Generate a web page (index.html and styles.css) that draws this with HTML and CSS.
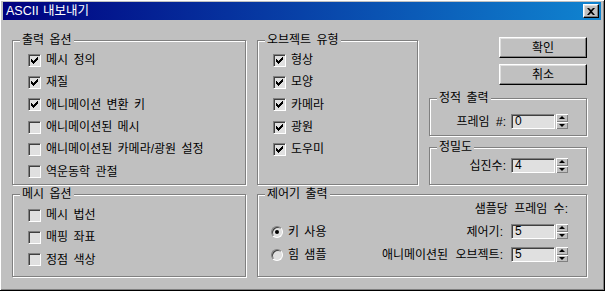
FILE: index.html
```html
<!DOCTYPE html>
<html lang="ko">
<head>
  <meta charset="UTF-8" />
  <title>ASCII 내보내기</title>
  <link rel="stylesheet" href="styles.css">
</head>
<body>

  <div class="window">
    <div class="titlebar">
      <span class="title">ASCII 내보내기</span>
      <button class="close-btn">
        <svg width="8" height="7" viewBox="0 0 8 7"><path d="M0 0h2l2 2 2-2h2L5 3.5 8 7H6L4 5 2 7H0l3-3.5z" fill="#000"/></svg>
      </button>
    </div>

    <div class="content">
      <fieldset class="group out-opts">
        <legend>출력 옵션</legend>
        <div class="check-list">
          <div class="check on"><span class="box"></span>메시 정의</div>
          <div class="check on"><span class="box"></span>재질</div>
          <div class="check on"><span class="box"></span>애니메이션 변환 키</div>
          <div class="check"><span class="box"></span>애니메이션된 메시</div>
          <div class="check"><span class="box"></span>애니메이션된 카메라/광원 설정</div>
          <div class="check"><span class="box"></span>역운동학 관절</div>
        </div>
      </fieldset>

      <fieldset class="group obj-types">
        <legend>오브젝트 유형</legend>
        <div class="check-list">
          <div class="check on"><span class="box"></span>형상</div>
          <div class="check on"><span class="box"></span>모양</div>
          <div class="check on"><span class="box"></span>카메라</div>
          <div class="check on"><span class="box"></span>광원</div>
          <div class="check on"><span class="box"></span>도우미</div>
        </div>
      </fieldset>

      <div class="side">
        <button class="btn">확인</button>
        <button class="btn">취소</button>
        <fieldset class="group static-out">
          <legend>정적 출력</legend>
          <div class="field-row">
            <span>프레임 #:</span>
            <div class="spin"><span class="spin-field">0</span><span class="spin-btns"><i class="up"></i><i class="down"></i></span></div>
          </div>
        </fieldset>
        <fieldset class="group precision">
          <legend>정밀도</legend>
          <div class="field-row">
            <span>십진수:</span>
            <div class="spin"><span class="spin-field">4</span><span class="spin-btns"><i class="up"></i><i class="down"></i></span></div>
          </div>
        </fieldset>
      </div>

      <fieldset class="group mesh-opts">
        <legend>메시 옵션</legend>
        <div class="check-list">
          <div class="check"><span class="box"></span>메시 법선</div>
          <div class="check"><span class="box"></span>매핑 좌표</div>
          <div class="check"><span class="box"></span>정점 색상</div>
        </div>
      </fieldset>

      <fieldset class="group ctrl-out">
        <legend>제어기 출력</legend>
        <div class="ctrl-grid">
          <span class="samples-head">샘플당 프레임 수:</span>
          <div class="radio on"><span class="dot"></span>키 사용</div>
          <span class="ctrl-label">제어기:</span>
          <div class="spin"><span class="spin-field">5</span><span class="spin-btns"><i class="up"></i><i class="down"></i></span></div>
          <div class="radio"><span class="dot"></span>힘 샘플</div>
          <span class="ctrl-label">애니메이션된 오브젝트:</span>
          <div class="spin"><span class="spin-field">5</span><span class="spin-btns"><i class="up"></i><i class="down"></i></span></div>
        </div>
      </fieldset>
    </div>
  </div>

</body>
</html>
```

FILE: styles.css
```css
body {
  margin: 0;
  font-family: "Liberation Sans", "Noto Sans CJK KR", sans-serif;
  font-size: 12px;
  line-height: 14px;
  word-spacing: 2px;
  color: #000;
  background: #c0c0c0;
}
.window {
  width: 605px;
  height: 291px;
  box-sizing: border-box;
  padding: 2px 3px 3px 3px;
  background: #c0c0c0;
  border-right: 1px solid #000;
  border-bottom: 1px solid #000;
  box-shadow: inset 1px 1px 0 #fff, inset -1px -1px 0 #808080;
}
.titlebar {
  height: 18px;
  display: flex;
  align-items: center;
  justify-content: space-between;
  padding: 0 2px 0 3px;
  background: linear-gradient(90deg, #000080, #1084d0);
}
.title {
  color: #fff;
  font-size: 12.5px;
  word-spacing: 1px;
}
.close-btn, .btn {
  background: #c0c0c0;
  border: 1px solid;
  border-color: #fff #000 #000 #fff;
  box-shadow: inset -1px -1px 0 #808080, inset 1px 1px 0 #dfdfdf;
  padding: 0;
  font: inherit;
  color: #000;
}
.close-btn {
  width: 16px;
  height: 14px;
  display: flex;
  align-items: center;
  justify-content: center;
}
.content {
  display: grid;
  grid-template-columns: 234px 161px 158px;
  grid-template-rows: 152px 90px;
  column-gap: 11px;
  row-gap: 2px;
  padding: 13px 0 0 9px;
}
.ctrl-out {
  grid-column: 2 / 4;
}

/* group boxes */
.group {
  margin: 0;
  padding: 0 7px;
  border: 1px solid #808080;
  box-shadow: inset 1px 1px 0 #fff, 1px 1px 0 #fff;
  min-width: 0;
}
.group legend {
  padding: 0 2px;
  background: #c0c0c0;
}

/* check boxes */
.check-list {
  display: flex;
  flex-direction: column;
  padding-top: 2px;
  margin-left: 8px;
}
.mesh-opts .check-list {
  padding-top: 3px;
}
.check {
  height: 22.3px;
  display: flex;
  align-items: center;
  gap: 5px;
}
.box {
  width: 13px;
  height: 13px;
  box-sizing: border-box;
  border: 1px solid;
  border-color: #808080 #fff #fff #808080;
  box-shadow: inset 1px 1px 0 #404040, inset -1px -1px 0 #dfdfdf;
  background: #e0e0e0;
}
.check.on .box {
  background: #e0e0e0 url("data:image/svg+xml,%3Csvg xmlns='http://www.w3.org/2000/svg' width='7' height='7'%3E%3Cpath d='M6 0h1v1H6zM5 1h2v1H5zM0 2h1v1H0zM4 2h3v1H4zM0 3h2v1H0zM3 3h3v1H3zM0 4h5v1H0zM1 5h3v1H1zM2 6h1v1H2z'/%3E%3C/svg%3E") no-repeat 2px 2px;
}

/* right side */
.side {
  display: flex;
  flex-direction: column;
}
.btn {
  align-self: flex-end;
  width: 88px;
  height: 21px;
  margin-top: 6px;
}
.btn:first-child {
  margin-top: 4px;
}
.static-out, .precision {
  height: 45px;
  margin-top: 6px;
  box-sizing: border-box;
}
.precision {
  margin-top: 4px;
}
.field-row {
  display: flex;
  justify-content: flex-end;
  align-items: center;
  gap: 5px;
  padding: 9px 11px 0 0;
  word-spacing: 3px;
}
.precision .field-row {
  padding-top: 4px;
}

/* spinners */
.spin {
  display: flex;
  gap: 1px;
}
.spin-field {
  width: 44px;
  height: 15px;
  box-sizing: border-box;
  border: 1px solid;
  border-color: #808080 #fff #fff #808080;
  box-shadow: inset 1px 1px 0 #404040, inset -1px -1px 0 #dfdfdf;
  background: #e0e0e0;
  padding-left: 3px;
  font-size: 12px;
  line-height: 13px;
}
.spin-btns {
  width: 12px;
  height: 15px;
  display: flex;
  flex-direction: column;
}
.spin-btns i {
  flex: 1;
  position: relative;
  background: #c0c0c0;
  box-shadow: inset 1px 1px 0 #fff, inset -1px -1px 0 #808080;
}
.spin-btns i::after {
  content: "";
  position: absolute;
  left: 3px;
  border-left: 3px solid transparent;
  border-right: 3px solid transparent;
}
.spin-btns .up::after {
  top: 2px;
  border-bottom: 3px solid #000;
}
.spin-btns .down::after {
  top: 2px;
  border-top: 3px solid #000;
}

/* controller output */
.ctrl-out {
  padding-right: 18px;
}
.ctrl-grid {
  display: grid;
  grid-template-columns: 1fr auto auto;
  grid-template-rows: 14px 15px 15px;
  row-gap: 8px;
  column-gap: 8px;
  align-items: center;
  padding: 1px 0 0 6px;
}
.samples-head {
  grid-column: 1 / 4;
  justify-self: end;
  word-spacing: 3px;
}
.ctrl-label {
  justify-self: end;
  word-spacing: 4px;
}
.radio {
  display: flex;
  align-items: center;
  gap: 5px;
}
.dot {
  width: 12px;
  height: 12px;
  box-sizing: border-box;
  border-radius: 50%;
  border: 1px solid;
  border-color: #808080 #fff #fff #808080;
  box-shadow: inset 1px 1px 0 #404040, inset -1px -1px 0 #dfdfdf;
  background: #e0e0e0;
  display: flex;
  align-items: center;
  justify-content: center;
}
.radio.on .dot::after {
  content: "";
  width: 4px;
  height: 4px;
  border-radius: 50%;
  background: #000;
}
```
